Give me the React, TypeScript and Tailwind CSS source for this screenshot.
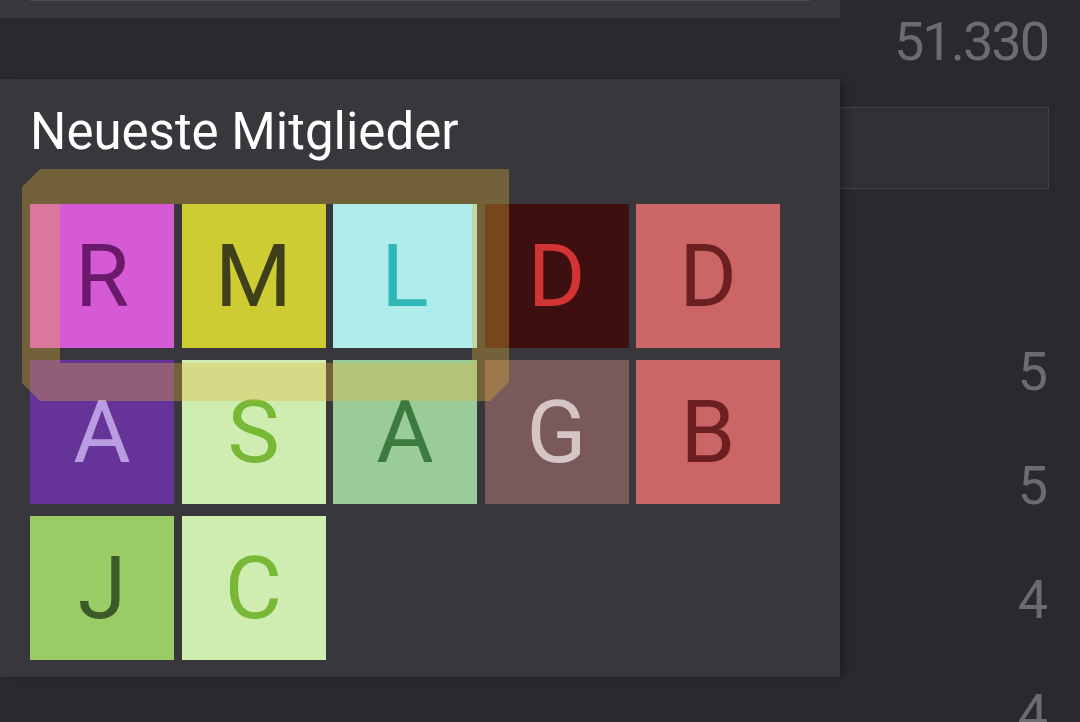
const members = [
  { letter: "R", bg: "bg-[#d659d6]", fg: "text-[#6b1a6b]" },
  { letter: "M", bg: "bg-[#cdcc33]", fg: "text-[#3f3f1c]" },
  { letter: "L", bg: "bg-[#adecea]", fg: "text-[#2eb7b7]" },
  { letter: "D", bg: "bg-[#3d0f10]", fg: "text-[#d23434]" },
  { letter: "D", bg: "bg-[#cc6566]", fg: "text-[#6b1f20]" },
  { letter: "A", bg: "bg-[#663399]", fg: "text-[#b99de0]" },
  { letter: "S", bg: "bg-[#cfedb0]", fg: "text-[#77b836]" },
  { letter: "A", bg: "bg-[#9acc99]", fg: "text-[#3d7a3d]" },
  { letter: "G", bg: "bg-[#795959]", fg: "text-[#d5c5c5]" },
  { letter: "B", bg: "bg-[#cc6566]", fg: "text-[#6b1f20]" },
  { letter: "J", bg: "bg-[#9acc66]", fg: "text-[#3d5a2a]" },
  { letter: "C", bg: "bg-[#cfedb0]", fg: "text-[#77b836]" },
];

const counts = ["5", "5", "4", "4"];

function MemberTile({ letter, bg, fg }: { letter: string; bg: string; fg: string }) {
  return (
    <div className={`h-[144px] flex items-center justify-center ${bg}`}>
      <span className={`text-[88px] leading-none ${fg}`}>{letter}</span>
    </div>
  );
}

// highlight box drawn on top of the tiles, with the cut-out the capture left in it
function Highlight() {
  return (
    <svg
      className="absolute z-20 left-[22px] top-[169px] pointer-events-none"
      width="487"
      height="232"
      viewBox="0 0 487 232"
    >
      <path
        fillRule="evenodd"
        fill="rgba(230,178,52,0.34)"
        d="M18 0 H487 V213 L468 232 H18 L0 214 V18 Z M38 35 V194 H450 V35 Z"
      />
    </svg>
  );
}

export default function App() {
  return (
    <div
      className="relative w-[1080px] h-[722px] overflow-hidden bg-[#2a292e] flex"
      style={{ fontFamily: "Roboto, 'Noto Sans', sans-serif" }}
    >
      <div className="relative z-10 w-[840px] shrink-0 flex flex-col">
        <div className="h-[18px] shrink-0 bg-[#38373c]">
          <div className="mx-[30px] h-px bg-[#4b4a4f]" />
        </div>

        <div className="mt-[61px] h-[598px] shrink-0 bg-[#38373c] px-[30px] pt-[27px] shadow-[6px_0_8px_-2px_rgba(0,0,0,0.3)]">
          <h2 className="text-[51px] leading-none text-white">Neueste Mitglieder</h2>
          <div className="mt-[47px] grid grid-cols-5 gap-x-[7.5px] gap-y-[12px] w-[750px]">
            {members.map((m, i) => (
              <MemberTile key={i} {...m} />
            ))}
          </div>
        </div>
      </div>

      <div className="flex-1 flex flex-col items-end pr-[32px]">
        <div className="mt-[15px] shrink-0 text-[54px] leading-none tracking-[-2px] text-[#6c6b70]">51.330</div>
        <div className="mt-[38px] shrink-0 -mr-[1px] self-stretch -ml-[20px] h-[82px] bg-[#313034] border border-[#414045]" />
        <div className="mt-[156px] shrink-0 flex flex-col gap-[60px]">
          {counts.map((c, i) => (
            <div key={i} className="text-[54px] leading-none text-[#6c6b70] text-right">
              {c}
            </div>
          ))}
        </div>
      </div>

      <Highlight />
    </div>
  );
}
